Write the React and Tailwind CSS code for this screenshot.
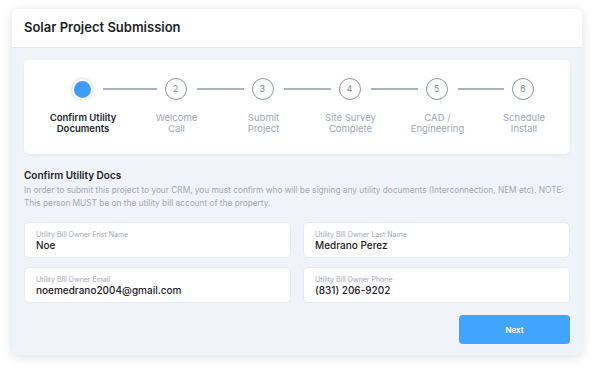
const steps = [
  { n: 1, label: ["Confirm Utility", "Documents"], active: true },
  { n: 2, label: ["Welcome", "Call"] },
  { n: 3, label: ["Submit", "Project"] },
  { n: 4, label: ["Site Survey", "Complete"] },
  { n: 5, label: ["CAD /", "Engineering"] },
  { n: 6, label: ["Schedule", "Install"] },
];

const fields = [
  { label: "Utility Bill Owner Frist Name", value: "Noe" },
  { label: "Utility Bill Owner Last Name", value: "Medrano Perez" },
  { label: "Utility Bill Owner Email", value: "noemedrano2004@gmail.com" },
  { label: "Utility Bill Owner Phone", value: "(831) 206-9202" },
];

export default function App() {
  return (
    <div className="w-[594px] h-[371px] bg-white pt-[9px] px-[12px] font-['Inter',sans-serif]">
      <div className="w-[570px] h-[346px] rounded-[6px] overflow-hidden bg-[#f0f3f8] shadow-[0_2px_12px_rgba(0,0,0,0.13)]">
        {/* header */}
        <div className="h-[39px] bg-white border-b border-[#e3e7ee] flex items-center px-[12px]">
          <h1 className="text-[13px] font-semibold text-[#1c1f24]">Solar Project Submission</h1>
        </div>

        <div className="px-[12px] pt-[12px]">
          {/* stepper */}
          <div className="h-[94px] bg-white rounded-[5px] shadow-[0_1px_3px_rgba(0,0,0,0.06)] pt-[18px] pl-[9px]">
            <div className="grid grid-cols-[100px_87px_87px_87px_87px_86px]">
              {steps.map((s, i) => (
                <div key={s.n} className="flex flex-col items-center">
                  <div className="w-full flex items-center h-[22px]">
                    <div className={`flex-1 h-[2px] mr-[8px] ${i === 0 ? "bg-transparent" : "bg-[#aab2bd]"}`} />
                    {s.active ? (
                      <div className="w-[21px] h-[21px] rounded-full bg-[#3d9dfc] border-[2px] border-white shadow-[0_0_3px_rgba(0,0,0,0.25)]" />
                    ) : (
                      <div className="w-[22px] h-[22px] rounded-full border-[1.5px] border-[#8d97a5] flex items-center justify-center text-[8.5px] text-[#7d8694]">
                        {s.n}
                      </div>
                    )}
                    <div className={`flex-1 h-[2px] ml-[10px] ${i === 5 ? "bg-transparent" : "bg-[#aab2bd]"}`} />
                  </div>
                  <div
                    className={`mt-[12px] text-center text-[9.5px] leading-[11px] ${
                      s.active ? "font-semibold text-[#23262b]" : "text-[#a1a7b0]"
                    }`}
                  >
                    {s.label[0]}
                    <br />
                    {s.label[1]}
                  </div>
                </div>
              ))}
            </div>
          </div>

          {/* section */}
          <div className="mt-[15px]">
            <h2 className="text-[10px] font-semibold text-[#1f2228] leading-[13px]">Confirm Utility Docs</h2>
            <p className="mt-[2px] text-[8.3px] leading-[13px] text-[#a3a8b0] whitespace-nowrap">
              In order to submit this project to your CRM, you must confirm who will be signing any utility documents (Interconnection, NEM etc). NOTE:
              <br />
              This person MUST be on the utility bill account of the property.
            </p>
          </div>

          <div className="mt-[12px] grid grid-cols-2 gap-x-[12px] gap-y-[9px]">
            {fields.map((f) => (
              <div key={f.label} className="h-[36px] bg-white rounded-[5px] border border-[#e6e9ee] px-[11px] pt-[7px]">
                <div className="text-[7px] leading-[9px] text-[#a3a8b0]">{f.label}</div>
                <div className="text-[10px] leading-[13px] font-medium text-[#1d2025]">{f.value}</div>
              </div>
            ))}
          </div>

          <div className="mt-[12px] flex justify-end">
            <button className="w-[111px] h-[29px] rounded-[4px] bg-[#42a5fd] text-white text-[8px] font-semibold">
              Next
            </button>
          </div>
        </div>
      </div>
    </div>
  );
}
